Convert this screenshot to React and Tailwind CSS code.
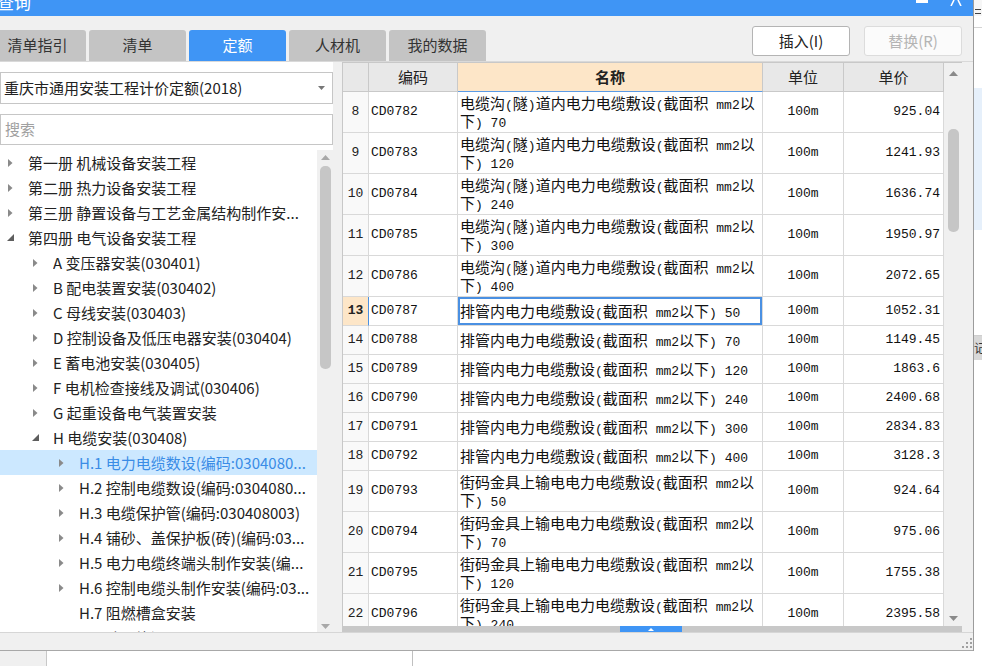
import React from "react";

const tree = [
  { l: 0, t: "第一册 机械设备安装工程", a: "c" },
  { l: 0, t: "第二册 热力设备安装工程", a: "c" },
  { l: 0, t: "第三册 静置设备与工艺金属结构制作安...", a: "c" },
  { l: 0, t: "第四册 电气设备安装工程", a: "e" },
  { l: 1, t: "A 变压器安装(030401)", a: "c" },
  { l: 1, t: "B 配电装置安装(030402)", a: "c" },
  { l: 1, t: "C 母线安装(030403)", a: "c" },
  { l: 1, t: "D 控制设备及低压电器安装(030404)", a: "c" },
  { l: 1, t: "E 蓄电池安装(030405)", a: "c" },
  { l: 1, t: "F 电机检查接线及调试(030406)", a: "c" },
  { l: 1, t: "G 起重设备电气装置安装", a: "c" },
  { l: 1, t: "H 电缆安装(030408)", a: "e" },
  { l: 2, t: "H.1 电力电缆数设(编码:0304080...", a: "c", sel: true },
  { l: 2, t: "H.2 控制电缆数设(编码:0304080...", a: "c" },
  { l: 2, t: "H.3 电缆保护管(编码:030408003)", a: "c" },
  { l: 2, t: "H.4 铺砂、盖保护板(砖)(编码:03...", a: "c" },
  { l: 2, t: "H.5 电力电缆终端头制作安装(编...", a: "c" },
  { l: 2, t: "H.6 控制电缆头制作安装(编码:03...", a: "c" },
  { l: 2, t: "H.7 阻燃槽盒安装", a: null },
  { l: 2, t: "H.8 防火堵洞", a: null },
];

const indent = ["w-0", "w-[25px]", "w-[51px]"];

const A = "电缆沟(隧)道内电力电缆敷设(截面积 mm2以";
const B = "排管内电力电缆敷设(截面积 mm2以下) ";
const C = "街码金具上输电电力电缆敷设(截面积 mm2以";

const rows = [
  { n: 8, c: "CD0782", l1: A, l2: "下) 70", p: "925.04" },
  { n: 9, c: "CD0783", l1: A, l2: "下) 120", p: "1241.93" },
  { n: 10, c: "CD0784", l1: A, l2: "下) 240", p: "1636.74" },
  { n: 11, c: "CD0785", l1: A, l2: "下) 300", p: "1950.97" },
  { n: 12, c: "CD0786", l1: A, l2: "下) 400", p: "2072.65" },
  { n: 13, c: "CD0787", l1: B + "50", p: "1052.31", sel: true },
  { n: 14, c: "CD0788", l1: B + "70", p: "1149.45" },
  { n: 15, c: "CD0789", l1: B + "120", p: "1863.6" },
  { n: 16, c: "CD0790", l1: B + "240", p: "2400.68" },
  { n: 17, c: "CD0791", l1: B + "300", p: "2834.83" },
  { n: 18, c: "CD0792", l1: B + "400", p: "3128.3" },
  { n: 19, c: "CD0793", l1: C, l2: "下) 50", p: "924.64" },
  { n: 20, c: "CD0794", l1: C, l2: "下) 70", p: "975.06" },
  { n: 21, c: "CD0795", l1: C, l2: "下) 120", p: "1755.38" },
  { n: 22, c: "CD0796", l1: C, l2: "下) 240", p: "2395.58" },
];

function Mixed({ s }) {
  const parts = s.split(/([\x20-\x7e]+)/).filter(Boolean);
  return parts.map((p, i) =>
    /^[\x20-\x7e]+$/.test(p) ? (
      <span key={i} className="font-['Liberation_Mono',monospace] text-[13px]">
        {p}
      </span>
    ) : (
      <span key={i}>{p}</span>
    )
  );
}

function Arrow({ a }) {
  if (a === "c")
    return (
      <svg width="5" height="8" viewBox="0 0 5 8">
        <polygon points="0,0 4.5,4 0,8" fill="#8a8a8a" />
      </svg>
    );
  if (a === "e")
    return (
      <svg width="7" height="7" viewBox="0 0 7 7">
        <polygon points="7,0 7,7 0,7" fill="#5e5e5e" />
      </svg>
    );
  return null;
}

function Up({ color = "#9a9a9a" }) {
  return (
    <svg width="9" height="5" viewBox="0 0 9 5">
      <polygon points="0,5 4.5,0 9,5" fill={color} />
    </svg>
  );
}
function Down({ color = "#9a9a9a" }) {
  return (
    <svg width="9" height="5" viewBox="0 0 9 5">
      <polygon points="0,0 9,0 4.5,5" fill={color} />
    </svg>
  );
}

const cols = "grid grid-cols-[26px_89px_305px_81px_100px]";

function Tab({ label, active }) {
  return (
    <div
      className={
        active
          ? "w-[97px] h-[31px] rounded-t-[3px] bg-[#3f95f5] text-white text-[15px] flex items-center justify-center"
          : "w-[97px] h-[31px] rounded-t-[3px] bg-[#c4c4c4] text-[#333] text-[15px] flex items-center justify-center"
      }
    >
      {label}
    </div>
  );
}

export default function App() {
  return (
    <div className="w-[982px] h-[666px] overflow-hidden bg-white flex flex-col font-['Noto_Sans_CJK_SC',sans-serif] text-[#222]">
      <div className="flex h-[651px] shrink-0">
        {/* dialog */}
        <div className="w-[974px] h-full flex flex-col bg-[#f0f0f0] border-r border-[#9c9c9c]">
          {/* title bar */}
          <div className="h-[16px] bg-[#3f95f5] flex overflow-hidden shrink-0">
            <div className="text-white text-[17px] leading-[17px] -mt-[7px] -ml-[3px] whitespace-nowrap">查询</div>
            <div className="flex-1" />
            <div className="w-[12px] h-[3px] bg-white" />
            <div className="w-[22px]" />
            <svg width="12" height="6" viewBox="0 0 12 6">
              <path d="M4 0 L1 6 M8 0 L11 6" stroke="white" strokeWidth="1.6" />
            </svg>
            <div className="w-[11px]" />
          </div>
          {/* toolbar */}
          <div className="h-[45px] flex shrink-0">
            <div className="flex items-end gap-[3px] -ml-[11px]">
              <Tab label="清单指引" />
              <Tab label="清单" />
              <Tab label="定额" active />
              <Tab label="人材机" />
              <Tab label="我的数据" />
            </div>
            <div className="flex-1" />
            <div className="flex gap-[14px] pt-[10px] pr-[11px]">
              <div className="w-[98px] h-[30px] bg-white border border-[#b4b4b4] rounded-[3px] flex items-center justify-center text-[15px] text-[#222]">
                插入(I)
              </div>
              <div className="w-[98px] h-[30px] bg-[#fbfbfb] border border-[#dcdcdc] rounded-[3px] flex items-center justify-center text-[15px] text-[#b4b4b4]">
                替换(R)
              </div>
            </div>
          </div>
          {/* main */}
          <div className="h-[571px] flex border-t border-[#d9d9d9] shrink-0">
            {/* left panel */}
            <div className="w-[333px] h-full bg-white flex flex-col pt-[10px]">
              <div className="h-[32px] border border-[#c6c6c6] flex items-center pl-[3px] pr-[7px] text-[15px] text-[#222] shrink-0">
                <span className="flex-1 whitespace-nowrap">重庆市通用安装工程计价定额(2018)</span>
                <svg width="7" height="4" viewBox="0 0 7 4">
                  <polygon points="0,0 7,0 3.5,4" fill="#777" />
                </svg>
              </div>
              <div className="h-[31px] mt-[10px] border border-[#c6c6c6] flex items-center pl-[4px] text-[15px] text-[#a0a0a0] shrink-0">
                搜索
              </div>
              <div className="mt-[5px] flex-1 flex overflow-hidden">
                <div className="w-[317px] overflow-hidden">
                  {tree.map((r, i) => (
                    <div
                      key={i}
                      className={
                        r.sel
                          ? "h-[25px] flex items-center bg-[#cce8ff] text-[#3a8ce6]"
                          : "h-[25px] flex items-center text-[#222]"
                      }
                    >
                      <div className={indent[r.l] + " shrink-0"} />
                      <div className="w-[21px] shrink-0 flex items-center justify-center">
                        <Arrow a={r.a} />
                      </div>
                      <div className="ml-[7px] text-[15px] leading-[25px] whitespace-nowrap overflow-hidden">{r.t}</div>
                    </div>
                  ))}
                </div>
                <div className="w-[16px] bg-[#f0f0f0] flex flex-col items-center pt-[5px] pb-[3px]">
                  <Up color="#a8a8a8" />
                  <div className="mt-[6px] w-[11px] h-[203px] rounded-[5px] bg-[#c6c6c6]" />
                  <div className="flex-1" />
                  <Down color="#a8a8a8" />
                </div>
              </div>
            </div>
            {/* splitter */}
            <div className="w-[9px] h-full bg-[#f0f0f0]" />
            {/* table */}
            <div className="w-[620px] h-full border-l border-t border-[#c8c8c8] flex flex-col bg-white">
              <div className="h-[563px] flex">
                <div className="w-[601px] flex flex-col overflow-hidden">
                  <div className={cols + " h-[29px] shrink-0 text-[15px] text-[#222]"}>
                    <div className="bg-[#e8e8e8] border-r border-b border-[#c9c9c9]" />
                    <div className="bg-[#e8e8e8] border-r border-b border-[#c9c9c9] flex items-center justify-center">编码</div>
                    <div className="bg-[#fde6c8] border-r border-b border-[#c9c9c9] border-b-[#5b9be6] flex items-center justify-center font-bold">名称</div>
                    <div className="bg-[#e8e8e8] border-r border-b border-[#c9c9c9] flex items-center justify-center">单位</div>
                    <div className="bg-[#e8e8e8] border-r border-b border-[#c9c9c9] flex items-center justify-center">单价</div>
                  </div>
                  <div className="flex-1 overflow-hidden">
                    {rows.map((r) => (
                      <div key={r.n} className={cols + (r.l2 ? " h-[41px]" : " h-[29px]")}>
                        <div
                          className={
                            r.sel
                              ? "bg-[#fde6c8] border-r border-b border-[#d9d9d9] border-r-[#4a90e2] flex items-center justify-center font-['Liberation_Mono',monospace] text-[13px] font-bold text-[#222]"
                              : "bg-[#f9f9f9] border-r border-b border-[#d9d9d9] flex items-center justify-center font-['Liberation_Mono',monospace] text-[13px] text-[#222]"
                          }
                        >
                          {r.n}
                        </div>
                        <div className="border-r border-b border-[#d9d9d9] flex items-center pl-[2px] font-['Liberation_Mono',monospace] text-[13px] text-[#111]">
                          {r.c}
                        </div>
                        <div
                          className={
                            r.sel
                              ? "border-r border-b border-[#d9d9d9] shadow-[inset_0_0_0_2px_#4a90e2] flex items-center pl-[2px] text-[15px] text-[#111] whitespace-pre overflow-hidden"
                              : "border-r border-b border-[#d9d9d9] flex items-center pl-[2px] text-[15px] text-[#111] whitespace-pre overflow-hidden"
                          }
                        >
                          <div className="flex flex-col">
                            <div className="h-[18px] leading-[18px]">
                              <Mixed s={r.l1} />
                            </div>
                            {r.l2 && (
                              <div className="h-[18px] leading-[18px]">
                                <Mixed s={r.l2} />
                              </div>
                            )}
                          </div>
                        </div>
                        <div className="border-r border-b border-[#d9d9d9] flex items-center justify-center font-['Liberation_Mono',monospace] text-[13px] text-[#111]">
                          100m
                        </div>
                        <div className="border-r border-b border-[#d9d9d9] flex items-center justify-end pr-[3px] font-['Liberation_Mono',monospace] text-[13px] text-[#111]">
                          {r.p}
                        </div>
                      </div>
                    ))}
                  </div>
                </div>
                <div className="w-[18px] bg-[#f0f0f0] flex flex-col items-center pt-[8px] pb-[5px]">
                  <Up color="#8a8a8a" />
                  <div className="mt-[53px] w-[11px] h-[103px] rounded-[5px] bg-[#c6c6c6]" />
                  <div className="flex-1" />
                  <Down color="#8a8a8a" />
                </div>
              </div>
              <div className="h-[6px] bg-[#c8c8c8] flex">
                <div className="w-[277px]" />
                <div className="w-[62px] h-full bg-[#3f95f5] flex items-center justify-center">
                  <svg width="6" height="3" viewBox="0 0 6 3">
                    <polygon points="0,3 3,0 6,3" fill="white" />
                  </svg>
                </div>
              </div>
            </div>
            <div className="w-[11px] h-full bg-[#f0f0f0]" />
          </div>
          {/* bottom band */}
          <div className="h-[19px] border-t border-b border-t-[#d6d6d6] border-b-[#a8a8a8] flex items-end justify-end pr-[1px] pb-[2px] shrink-0">
            <svg width="10" height="10" viewBox="0 0 10 10">
              <rect x="8" y="0" width="2" height="2" fill="#a0a0a0" />
              <rect x="4" y="4" width="2" height="2" fill="#a0a0a0" />
              <rect x="8" y="4" width="2" height="2" fill="#a0a0a0" />
              <rect x="0" y="8" width="2" height="2" fill="#a0a0a0" />
              <rect x="4" y="8" width="2" height="2" fill="#a0a0a0" />
              <rect x="8" y="8" width="2" height="2" fill="#a0a0a0" />
            </svg>
          </div>
        </div>
        {/* background app right strip */}
        <div className="w-[8px] h-full flex flex-col bg-white overflow-hidden">
          <div className="h-[16px] bg-[#f6f6f6] flex flex-col justify-end pb-[2px] pl-[1px] gap-[3px]">
            <div className="w-[6px] h-[1px] bg-[#444]" />
            <div className="w-[6px] h-[1px] bg-[#444]" />
          </div>
          <div className="h-[12px] border-b border-[#d4d4d4]" />
          <div className="h-[60px]" />
          <div className="h-[142px] bg-[#e6f0fb]" />
          <div className="h-[106px] border-b border-[#cfcfcf]" />
          <div className="h-[24px] bg-[#d8d8d8] text-[12px] leading-[24px] text-[#333] whitespace-nowrap">记</div>
          <div className="flex-1" />
        </div>
      </div>
      {/* background app bottom strip */}
      <div className="h-[15px] flex shrink-0">
        <div className="w-[47px] bg-[#f0f0f0] border-r border-[#c8c8c8]" />
        <div className="w-[366px] bg-white border-r border-[#c0c0c0]" />
        <div className="flex-1 bg-white" />
      </div>
    </div>
  );
}
